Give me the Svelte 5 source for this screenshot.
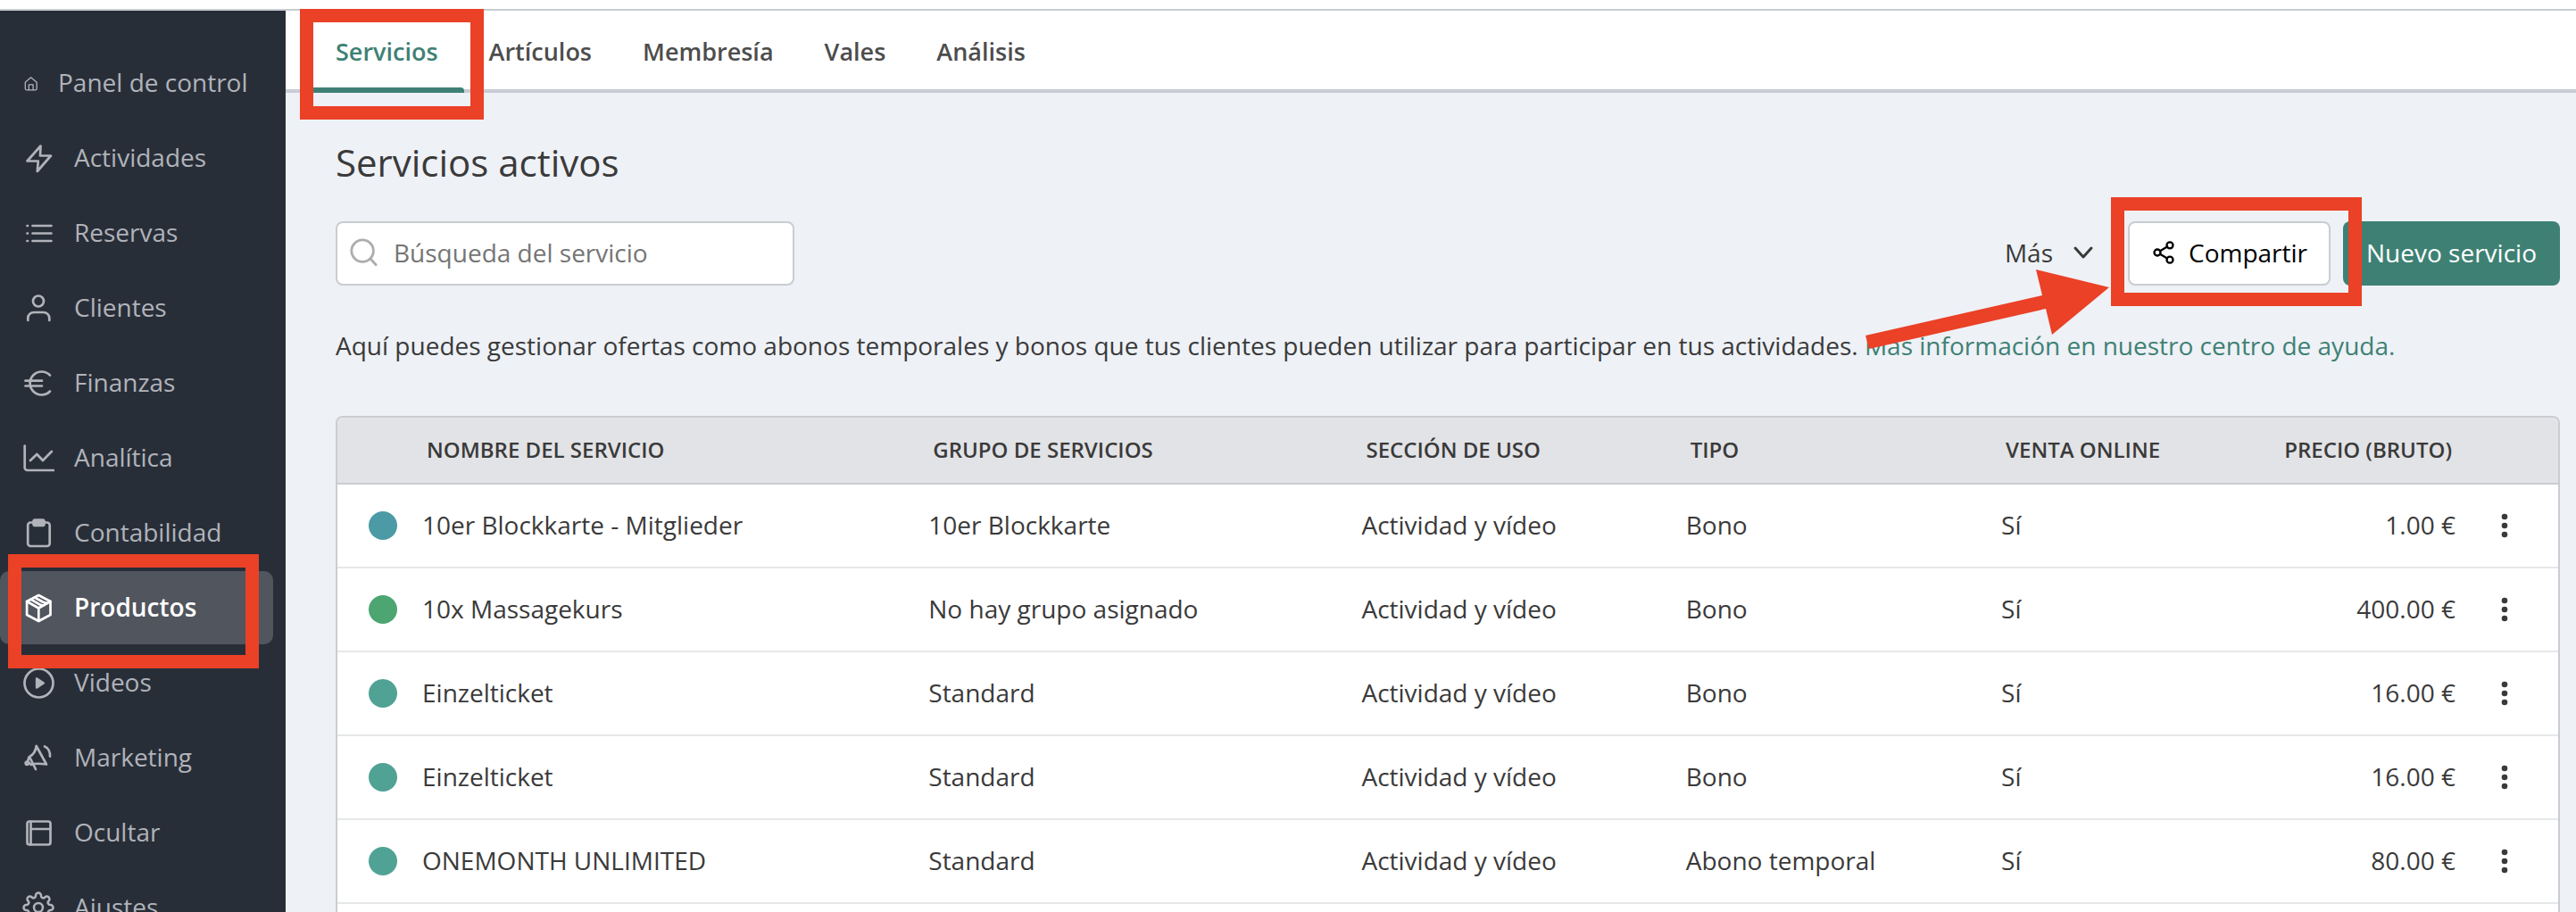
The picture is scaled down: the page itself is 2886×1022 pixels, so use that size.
<script lang="ts">
  const icons: Record<string, string> = {
    home: '<path d="M3.3 8.3 9.6 2.8l6.6 5.5v6.9a1.6 1.6 0 0 1-1.6 1.6H4.9a1.6 1.6 0 0 1-1.6-1.6z"/><path d="M7.3 16.5v-5.6h4.8v5.6"/>',
    bolt: '<path d="M20.5 4.5 5.5 21.5h12.3L16.8 33 32 15.5H20z"/>',
    list: '<path d="M11.5 10h21M11.5 18.5h21M11.5 27h21M5.5 10h.5M5.5 18.5h.5M5.5 27h.5"/>',
    user: '<circle cx="18" cy="10.5" r="6"/><path d="M6.3 32v-2.5a6.5 6.5 0 0 1 6.5-6.5h11a6.5 6.5 0 0 1 6.5 6.5V32"/>',
    euro: '<path d="M31 9.5a13 13 0 1 0 0 18M3.5 15.7H22M3.5 21.5H22"/>',
    chart: '<path d="M2.7 4.5V29a3 3 0 0 0 3 3H35"/><path d="m9 21 7.3-7 6.7 7 9.8-10"/>',
    clipboard: '<rect x="6.2" y="6.5" width="24.5" height="26.5" rx="3"/><rect x="12.5" y="3.5" width="12" height="6.5" rx="2" fill="currentColor"/>',
    box: '<path d="m18.3 4 13.2 7v15l-13.2 7-13.2-7V11z"/><path d="m5.1 11 13.2 7.5L31.5 11M18.3 18.5V33M9.5 8.7l9.5 5.5 4.5 1.5M13.8 6.5l9.5 5.3 4.7 1.2"/>',
    play: '<circle cx="18.5" cy="18.5" r="16"/><path d="M16.2 13.5v10l7.5-5z" fill="currentColor"/>',
    megaphone: '<path d="M15.7 5C15 11 12 15 7.5 17.5L6 22.5l4 3.500c4-2 10-1.5 17-.5z"/><path d="m9 19 6 12M25 5.5c3.8 1.5 6.3 6 6 11.2"/><circle cx="5.3" cy="24.3" r="1.6"/>',
    panel: '<rect x="5.5" y="5.5" width="26" height="26" rx="2.5"/><path d="M9.5 5.5v26M9.5 14h22"/>',
    gear: '<g transform="scale(1.5)" stroke-width="1.7"><circle cx="12" cy="12" r="3.3"/><path d="M19.4 15a1.65 1.65 0 0 0 .33 1.82l.06.06a2 2 0 1 1-2.83 2.83l-.06-.06a1.65 1.65 0 0 0-2.8 1.17V21a2 2 0 0 1-4 0v-.09A1.65 1.65 0 0 0 7.3 19.7l-.13.01a2 2 0 1 1-2.83-2.83l.06-.06A1.65 1.65 0 0 0 3.09 14H3a2 2 0 0 1 0-4h.09A1.65 1.65 0 0 0 4.35 7.18l-.06-.06a2 2 0 1 1 2.83-2.83l.06.06A1.65 1.65 0 0 0 10 3.09V3a2 2 0 0 1 4 0v.09a1.65 1.65 0 0 0 2.82 1.26l.06-.06a2 2 0 1 1 2.83 2.83l-.06.06A1.65 1.65 0 0 0 20.91 10H21a2 2 0 0 1 0 4h-.09a1.65 1.65 0 0 0-1.51 1z"/></g>'
  };

  const menu = [
    { label: 'Panel de control', icon: 'home', small: true },
    { label: 'Actividades', icon: 'bolt' },
    { label: 'Reservas', icon: 'list' },
    { label: 'Clientes', icon: 'user' },
    { label: 'Finanzas', icon: 'euro' },
    { label: 'Analítica', icon: 'chart' },
    { label: 'Contabilidad', icon: 'clipboard' },
    { label: 'Productos', icon: 'box', active: true },
    { label: 'Videos', icon: 'play' },
    { label: 'Marketing', icon: 'megaphone' },
    { label: 'Ocultar', icon: 'panel' },
    { label: 'Ajustes', icon: 'gear' }
  ];

  const tabs = ['Servicios', 'Artículos', 'Membresía', 'Vales', 'Análisis'];
  let activeTab = $state('Servicios');
  let search = $state('');

  const services = [
    { color: '#4c9aa6', name: '10er Blockkarte - Mitglieder', group: '10er Blockkarte', type: 'Bono', price: '1.00 €' },
    { color: '#4da572', name: '10x Massagekurs', group: 'No hay grupo asignado', type: 'Bono', price: '400.00 €' },
    { color: '#50a294', name: 'Einzelticket', group: 'Standard', type: 'Bono', price: '16.00 €' },
    { color: '#50a294', name: 'Einzelticket', group: 'Standard', type: 'Bono', price: '16.00 €' },
    { color: '#50a294', name: 'ONEMONTH UNLIMITED', group: 'Standard', type: 'Abono temporal', price: '80.00 €' }
  ];

  let visible = $derived(services.filter((s) => s.name.toLowerCase().includes(search.toLowerCase())));
</script>

<div class="app">
  <div class="topbar"></div>
  <div class="body">
    <nav class="sidebar">
      {#each menu as item}
        <a href="#{item.icon}" class="item" class:active={item.active}>
          <svg class="icon" class:small={item.small} viewBox={item.small ? '0 0 18 18' : '0 0 36 36'} aria-hidden="true">
            {@html icons[item.icon]}
          </svg>
          <span>{item.label}</span>
          {#if item.active}<i class="mark mark-item"></i>{/if}
        </a>
      {/each}
    </nav>

    <div class="main">
      <div class="tabs">
        {#each tabs as tab}
          <button class="tab" class:active={tab === activeTab} onclick={() => (activeTab = tab)}>
            {tab}
            {#if tab === tabs[0]}<i class="mark mark-tab"></i>{/if}
          </button>
        {/each}
      </div>

      <main class="content">
        <h1>Servicios activos</h1>

        <div class="toolbar">
          <label class="search">
            <svg viewBox="0 0 36 36" aria-hidden="true"><circle cx="16" cy="16" r="13" /><path d="m25.5 25.5 6.5 7" /></svg>
            <input type="text" placeholder="Búsqueda del servicio" aria-label="Búsqueda del servicio" bind:value={search} />
          </label>
          <div class="actions">
            <button class="more">
              Más
              <svg viewBox="0 0 28 28" aria-hidden="true"><path d="m5 9 9 10 9-10" /></svg>
            </button>
            <div class="share-wrap">
              <button class="btn share">
                <svg viewBox="0 0 24 24" aria-hidden="true">
                  <circle cx="18" cy="5" r="3" /><circle cx="6" cy="12" r="3" /><circle cx="18" cy="19" r="3" />
                  <path d="m8.6 13.5 6.8 4M15.4 6.5l-6.8 4" />
                </svg>
                Compartir
              </button>
              <i class="mark mark-share"></i>
              <svg class="arrow" viewBox="0 0 274 92" aria-hidden="true">
                <path d="M0 75 198 30 191 1l82 20-64 53-7-29L4 90z" />
              </svg>
            </div>
            <button class="btn primary">Nuevo servicio</button>
          </div>
        </div>

        <p class="intro">
          Aquí puedes gestionar ofertas como abonos temporales y bonos que tus clientes pueden utilizar para participar en tus actividades.
          <a href="#ayuda">Más información en nuestro centro de ayuda.</a>
        </p>

        <div class="panel">
          <table>
            <thead>
              <tr>
                <th class="c-dot"></th>
                <th class="c-name">NOMBRE DEL SERVICIO</th>
                <th class="c-group">GRUPO DE SERVICIOS</th>
                <th class="c-use">SECCIÓN DE USO</th>
                <th class="c-type">TIPO</th>
                <th class="c-online">VENTA ONLINE</th>
                <th class="price">PRECIO (BRUTO)</th>
                <th class="c-menu"></th>
              </tr>
            </thead>
            <tbody>
              {#each visible as s}
                <tr>
                  <td class="c-dot"><span class="dot" style="background: {s.color}"></span></td>
                  <td>{s.name}</td>
                  <td>{s.group}</td>
                  <td>Actividad y vídeo</td>
                  <td>{s.type}</td>
                  <td>Sí</td>
                  <td class="price">{s.price}</td>
                  <td class="c-menu">
                    <button class="kebab" aria-label="Opciones">
                      <svg viewBox="0 0 30 30" aria-hidden="true"><circle cx="15" cy="5" r="3.3" /><circle cx="15" cy="15" r="3.3" /><circle cx="15" cy="25" r="3.3" /></svg>
                    </button>
                  </td>
                </tr>
              {/each}
            </tbody>
          </table>
        </div>
      </main>
    </div>
  </div>
</div>

<style>
  :global(body) {
    margin: 0;
    background: #eef1f6;
  }

  .app {
    display: flex;
    flex-direction: column;
    height: 100vh;
    overflow: hidden;
    font-family: "Open Sans", "Noto Sans", sans-serif;
    font-size: 28px;
    line-height: 38px;
    color: #3a3a3a;
  }

  button, input {
    font: inherit;
    color: inherit;
    border: 0;
    padding: 0;
    margin: 0;
    background: none;
  }

  button {
    cursor: pointer;
    white-space: nowrap;
  }

  a {
    color: #3e8174;
    text-decoration: none;
  }

  svg {
    flex: none;
    fill: none;
    stroke: currentColor;
    stroke-linecap: round;
    stroke-linejoin: round;
  }

  .topbar {
    flex: none;
    height: 10px;
    background: #fff;
    border-bottom: 2px solid #c9ccd1;
  }

  .body {
    flex: 1;
    display: flex;
    min-height: 0;
  }

  /* Sidebar */
  .sidebar {
    flex: none;
    display: flex;
    flex-direction: column;
    gap: 2px;
    box-sizing: border-box;
    width: 320px;
    padding: 40px 14px 0 0;
    background: #282e38;
  }

  .item {
    flex: none;
    position: relative;
    display: flex;
    align-items: center;
    gap: 22px;
    height: 82px;
    padding-left: 25px;
    border-radius: 10px;
    color: #b0b3ba;
    white-space: nowrap;
  }

  .item span {
    padding-bottom: 2px;
  }

  .item.active {
    background: #51555e;
    color: #fff;
    font-weight: 600;
  }

  .icon {
    width: 36px;
    height: 36px;
    stroke-width: 2.7;
  }

  .icon.small {
    width: 18px;
    height: 18px;
    stroke-width: 1.3;
  }

  /* Red highlight frames */
  .mark {
    position: absolute;
    z-index: 2;
    border: 15px solid #ea4127;
    pointer-events: none;
  }

  .mark-item {
    inset: -19px 16px -27px 9px;
  }

  .mark-tab {
    inset: -2px -22px -30px -12px;
  }

  .mark-share {
    inset: -27px -35px -23px -19px;
  }

  .arrow {
    position: absolute;
    z-index: 2;
    top: 53px;
    right: 247px;
    width: 274px;
    height: 92px;
    fill: #ea4127;
    stroke: none;
    pointer-events: none;
  }

  /* Main */
  .main {
    flex: 1;
    display: flex;
    flex-direction: column;
    min-width: 0;
  }

  .tabs {
    flex: none;
    display: flex;
    height: 88px;
    padding-left: 28px;
    background: #fff;
    border-bottom: 4px solid #c9ccd4;
  }

  .tab {
    position: relative;
    height: 92px;
    padding: 0 29px 0 28px;
    font-size: 27px;
    font-weight: 600;
    color: #4d4d4d;
  }

  .tab.active {
    color: #3e8174;
  }

  .tab.active::after {
    content: "";
    position: absolute;
    inset: auto 0 0;
    height: 6px;
    border-radius: 4px 4px 0 0;
    background: #3e8174;
  }

  .content {
    flex: 1;
    display: flex;
    flex-direction: column;
    min-height: 0;
    padding: 48px 18px 0 56px;
  }

  h1 {
    margin: 0 0 36px;
    font-size: 42px;
    line-height: 60px;
    font-weight: 400;
  }

  .toolbar {
    display: flex;
    justify-content: space-between;
  }

  .search {
    display: flex;
    align-items: center;
    gap: 16px;
    box-sizing: border-box;
    width: 514px;
    height: 72px;
    padding: 0 14px 2px 13px;
    border: 2px solid #c9ccd1;
    border-radius: 8px;
    background: #fff;
  }

  .search svg {
    width: 34px;
    height: 34px;
    stroke: #adadad;
    stroke-width: 3;
  }

  .search input {
    flex: 1;
    min-width: 0;
    outline: none;
  }

  .search input::placeholder {
    color: #757575;
    opacity: 1;
  }

  .actions {
    display: flex;
    align-items: center;
    gap: 14px;
  }

  .more {
    display: flex;
    align-items: center;
    gap: 20px;
    margin-right: 22px;
    padding-bottom: 2px;
  }

  .more svg {
    width: 28px;
    height: 28px;
    stroke-width: 3;
  }

  .share-wrap {
    position: relative;
  }

  .btn {
    display: flex;
    align-items: center;
    box-sizing: border-box;
    height: 72px;
    padding: 0 26px 2px;
    border-radius: 8px;
  }

  .share {
    gap: 14px;
    border: 2px solid #c9ccd1;
    padding: 0 24px 2px;
    background: #fff;
    color: #000;
  }

  .share svg {
    width: 28px;
    height: 28px;
    stroke-width: 2;
  }

  .primary {
    background: #3e8174;
    color: #fff;
  }

  .intro {
    margin: 48px 0 60px;
  }

  /* Services table */
  .panel {
    flex: 1;
    border: 2px solid #c9ccd1;
    border-bottom: 0;
    border-radius: 8px 8px 0 0;
    background: #fff;
    overflow: hidden;
  }

  table {
    width: 100%;
    table-layout: fixed;
    border-collapse: separate;
    border-spacing: 0;
  }

  th, td {
    padding: 0 0 2px;
    text-align: left;
    white-space: nowrap;
  }

  th {
    height: 71px;
    padding-left: 5px;
    border-bottom: 2px solid #c9ccd1;
    background: #e2e3e6;
    font-size: 24px;
    font-weight: 600;
  }

  td {
    height: 90px;
    border-bottom: 2px solid #e6e7e8;
  }

  .c-dot {
    width: 60px;
    padding: 0 0 0 35px;
  }

  .c-name {
    width: 22.6%;
  }

  .c-group {
    width: 19.3%;
  }

  .c-use {
    width: 14.4%;
  }

  .c-type {
    width: 14%;
  }

  .c-online {
    width: 10.2%;
  }

  .c-menu {
    width: 115px;
    padding: 0;
  }

  .price {
    text-align: right;
  }

  th.price {
    padding-right: 4px;
  }

  .dot {
    display: block;
    width: 32px;
    height: 32px;
    border-radius: 50%;
  }

  .kebab {
    display: block;
    margin-left: 40px;
  }

  .kebab svg {
    display: block;
    width: 30px;
    height: 30px;
    fill: currentColor;
    stroke: none;
  }
</style>
